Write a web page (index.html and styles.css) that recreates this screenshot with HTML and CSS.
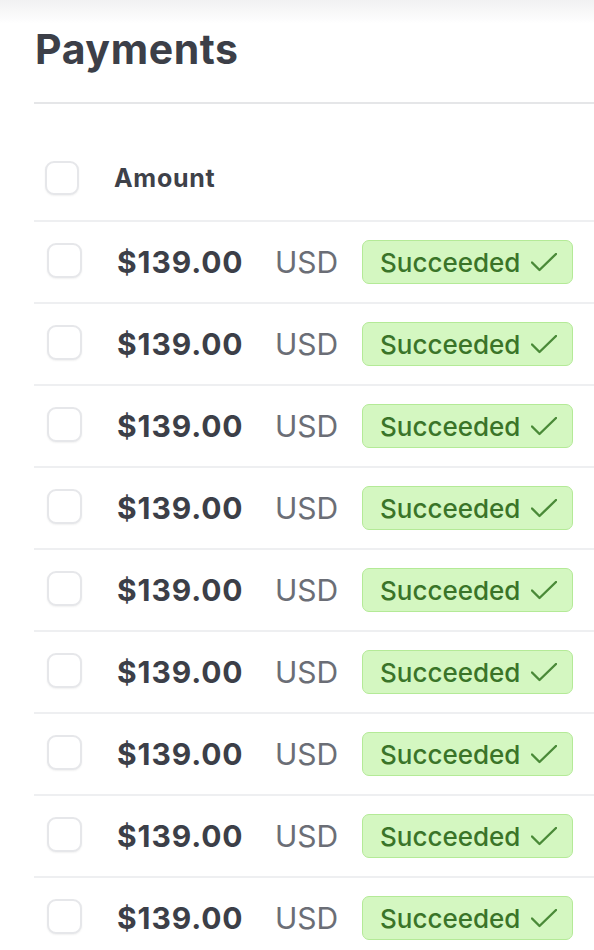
FILE: index.html
```html
<!DOCTYPE html>
<html lang="en">
<head>
  <title>Payments</title>
  <link rel="stylesheet" href="styles.css">
</head>
<body>
  <div class="page">
    <h1 class="title">Payments</h1>
    <div class="list">
      <div class="head">
        <span class="check"></span>
        <span class="head-label">Amount</span>
      </div>
      <div class="row">
        <span class="check"></span>
        <span class="amount">$139.00</span>
        <span class="currency">USD</span>
        <span class="badge">Succeeded <svg width="26" height="19" viewBox="0 0 26 19"><path d="M1 9.5 L8.5 17 L25 1" fill="none" stroke="#4a8a38" stroke-width="2.4" stroke-linecap="round" stroke-linejoin="round"/></svg></span>
      </div>
      <div class="row">
        <span class="check"></span>
        <span class="amount">$139.00</span>
        <span class="currency">USD</span>
        <span class="badge">Succeeded <svg width="26" height="19" viewBox="0 0 26 19"><path d="M1 9.5 L8.5 17 L25 1" fill="none" stroke="#4a8a38" stroke-width="2.4" stroke-linecap="round" stroke-linejoin="round"/></svg></span>
      </div>
      <div class="row">
        <span class="check"></span>
        <span class="amount">$139.00</span>
        <span class="currency">USD</span>
        <span class="badge">Succeeded <svg width="26" height="19" viewBox="0 0 26 19"><path d="M1 9.5 L8.5 17 L25 1" fill="none" stroke="#4a8a38" stroke-width="2.4" stroke-linecap="round" stroke-linejoin="round"/></svg></span>
      </div>
      <div class="row">
        <span class="check"></span>
        <span class="amount">$139.00</span>
        <span class="currency">USD</span>
        <span class="badge">Succeeded <svg width="26" height="19" viewBox="0 0 26 19"><path d="M1 9.5 L8.5 17 L25 1" fill="none" stroke="#4a8a38" stroke-width="2.4" stroke-linecap="round" stroke-linejoin="round"/></svg></span>
      </div>
      <div class="row">
        <span class="check"></span>
        <span class="amount">$139.00</span>
        <span class="currency">USD</span>
        <span class="badge">Succeeded <svg width="26" height="19" viewBox="0 0 26 19"><path d="M1 9.5 L8.5 17 L25 1" fill="none" stroke="#4a8a38" stroke-width="2.4" stroke-linecap="round" stroke-linejoin="round"/></svg></span>
      </div>
      <div class="row">
        <span class="check"></span>
        <span class="amount">$139.00</span>
        <span class="currency">USD</span>
        <span class="badge">Succeeded <svg width="26" height="19" viewBox="0 0 26 19"><path d="M1 9.5 L8.5 17 L25 1" fill="none" stroke="#4a8a38" stroke-width="2.4" stroke-linecap="round" stroke-linejoin="round"/></svg></span>
      </div>
      <div class="row">
        <span class="check"></span>
        <span class="amount">$139.00</span>
        <span class="currency">USD</span>
        <span class="badge">Succeeded <svg width="26" height="19" viewBox="0 0 26 19"><path d="M1 9.5 L8.5 17 L25 1" fill="none" stroke="#4a8a38" stroke-width="2.4" stroke-linecap="round" stroke-linejoin="round"/></svg></span>
      </div>
      <div class="row">
        <span class="check"></span>
        <span class="amount">$139.00</span>
        <span class="currency">USD</span>
        <span class="badge">Succeeded <svg width="26" height="19" viewBox="0 0 26 19"><path d="M1 9.5 L8.5 17 L25 1" fill="none" stroke="#4a8a38" stroke-width="2.4" stroke-linecap="round" stroke-linejoin="round"/></svg></span>
      </div>
      <div class="row">
        <span class="check"></span>
        <span class="amount">$139.00</span>
        <span class="currency">USD</span>
        <span class="badge">Succeeded <svg width="26" height="19" viewBox="0 0 26 19"><path d="M1 9.5 L8.5 17 L25 1" fill="none" stroke="#4a8a38" stroke-width="2.4" stroke-linecap="round" stroke-linejoin="round"/></svg></span>
      </div>
    </div>
  </div>
</body>
</html>
```

FILE: styles.css
```css
body {
  margin: 0;
  font-family: Inter, 'Open Sans', sans-serif;
  background: linear-gradient(#f1f1f2, #fff 24px);
  background-repeat: no-repeat;
  background-color: #fff;
}
.page {
  padding-left: 34px;
}
.title {
  margin: 0;
  padding-top: 25px;
  padding-left: 1px;
  height: 104px;
  box-sizing: border-box;
  font-size: 41px;
  font-weight: 700;
  line-height: 48px;
  letter-spacing: 0.6px;
  color: #3c3f48;
  border-bottom: 2px solid #e5e6e8;
}
.head {
  display: flex;
  align-items: center;
  height: 116px;
  box-sizing: border-box;
  padding: 32px 0 0 11px;
}
.head-label {
  margin-left: 35px;
  font-size: 25px;
  font-weight: 700;
  letter-spacing: 0.7px;
  color: #3e4149;
}
.check {
  display: inline-block;
  width: 34px;
  height: 34px;
  box-sizing: border-box;
  border: 2px solid #e6e7ea;
  border-radius: 9px;
  background: #fff;
  box-shadow: 0 1px 2px rgba(0, 0, 0, 0.06);
}
.row {
  display: flex;
  align-items: center;
  height: 80px;
  border-top: 2px solid #eeeff1;
  padding-left: 13px;
}
.row .check {
  width: 35px;
  height: 35px;
  margin-top: -3px;
}
.amount {
  width: 158px;
  margin-left: 35px;
  font-size: 30px;
  font-weight: 700;
  letter-spacing: 0.9px;
  color: #3c3f48;
}
.currency {
  width: 87px;
  font-size: 30px;
  color: #6b6e76;
}
.badge {
  display: inline-flex;
  align-items: center;
  gap: 11px;
  height: 44px;
  box-sizing: border-box;
  padding: 0 15px 0 17px;
  border: 1.5px solid #b4ea97;
  border-radius: 7px;
  background: #d4f7c1;
  font-size: 26px;
  font-weight: 500;
  color: #3a7429;
}
```
